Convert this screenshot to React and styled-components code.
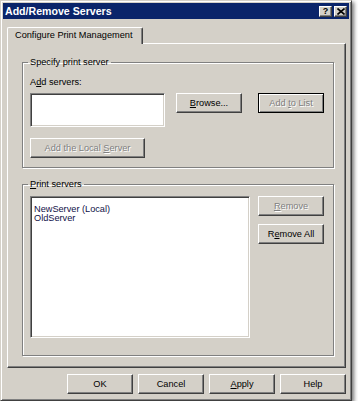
import React from 'react'
import styled, { createGlobalStyle, css } from 'styled-components'

const Global = createGlobalStyle`
  html, body {
    margin: 0;
    padding: 0;
    background: #ffffff;
  }
  body {
    font-family: "Liberation Sans", Arial, sans-serif;
    font-size: 9.2px;
    color: #000;
  }
  * { box-sizing: border-box; }
`

const Window = styled.div`
  width: 352px;
  height: 401px;
  background: #d4d0c8;
  border: 1px solid;
  border-color: #d4d0c8 #404040 #404040 #d4d0c8;
  box-shadow: inset 1px 1px 0 #ffffff, inset -1px -1px 0 #808080, 2px 2px 4px rgba(0, 0, 0, 0.55);
  padding: 2px;
  display: flex;
  flex-direction: column;
`

const TitleBar = styled.div`
  height: 16px;
  background: #0a246a;
  display: flex;
  align-items: center;
  justify-content: space-between;
  padding: 0 2px 0 2px;
`

const Title = styled.span`
  color: #fff;
  font-weight: bold;
  font-size: 10.6px;
`

const Caption = styled.div`
  display: flex;
  gap: 2px;
`

const CapButton = styled.div`
  width: 13px;
  height: 11px;
  background: #d4d0c8;
  border: 1px solid;
  border-color: #ffffff #404040 #404040 #ffffff;
  box-shadow: inset -1px -1px 0 #808080;
  display: flex;
  align-items: center;
  justify-content: center;
  font-weight: bold;
  font-size: 9px;
  line-height: 9px;
  color: #000;
`

const Body = styled.div`
  padding: 8px 3px 0 4px;
  display: flex;
  flex-direction: column;
`

const TabStrip = styled.div`
  display: flex;
`

const Tab = styled.div`
  position: relative;
  z-index: 1;
  width: 136px;
  height: 17px;
  margin-bottom: -1px;
  background: #d4d0c8;
  border-top: 1px solid #fff;
  border-left: 1px solid #fff;
  border-right: 1px solid #404040;
  border-radius: 2px 2px 0 0;
  box-shadow: inset -1px 0 0 #808080;
  padding: 2px 0 0 7px;
  line-height: 11px;
`

const Panel = styled.div`
  width: 339px;
  height: 325px;
  border: 1px solid;
  border-color: #ffffff #404040 #404040 #ffffff;
  box-shadow: inset -1px -1px 0 #808080;
  padding: 13px 0 0 14px;
  display: flex;
  flex-direction: column;
`

const Group = styled.fieldset`
  width: 312px;
  margin: ${p => (p.$second ? '11px 0 0 0' : '0')};
  border: 1px solid #808080;
  box-shadow: inset 1px 1px 0 #fff, 1px 1px 0 #fff;
  padding: ${p => p.$pad};
  min-width: 0;
`

const Legend = styled.legend`
  padding: 0 2px;
  margin-left: -2px;
  line-height: 11px;
`

const AddGrid = styled.div`
  display: grid;
  grid-template-columns: 135px 11px 66px 16px 66px;
  grid-template-areas:
    'label label label label label'
    'input . browse . add'
    'local local local local local';
`

const Label = styled.div`
  grid-area: label;
  line-height: 11px;
  margin-bottom: 5px;
`

const sunken = css`
  background: #fff;
  border: 1px solid;
  border-color: #808080 #ffffff #ffffff #808080;
  box-shadow: inset 1px 1px 0 #404040, inset -1px -1px 0 #d4d0c8;
`

const TextBox = styled.div`
  grid-area: input;
  height: 34px;
  ${sunken}
`

const Button = styled.div`
  grid-area: ${p => p.$area || 'auto'};
  width: ${p => p.$w || 66}px;
  height: 20px;
  align-self: start;
  margin-top: ${p => p.$mt || 0}px;
  background: #d4d0c8;
  border: 1px solid;
  border-color: ${p => (p.$default ? '#000' : '#ffffff #404040 #404040 #ffffff')};
  box-shadow: ${p =>
    p.$default ? 'inset 1px 1px 0 #fff, inset -1px -1px 0 #808080' : 'inset -1px -1px 0 #808080'};
  display: flex;
  align-items: center;
  justify-content: center;
  line-height: 11px;
  color: ${p => (p.$disabled ? '#808080' : '#000')};
  text-shadow: ${p => (p.$disabled ? '1px 1px 0 #fff' : 'none')};
`

const ServersRow = styled.div`
  display: flex;
  gap: 8px;
`

const ListBox = styled.div`
  width: 220px;
  height: 142px;
  ${sunken}
  padding: 8px 3px;
  color: #101048;
  line-height: 9px;
`

const SideButtons = styled.div`
  display: flex;
  flex-direction: column;
  gap: 8px;
`

const Footer = styled.div`
  display: flex;
  justify-content: flex-end;
  gap: 5px;
  padding-top: 6px;
`

export default function App() {
  return (
    <>
      <Global />
      <Window>
        <TitleBar>
          <Title>Add/Remove Servers</Title>
          <Caption>
            <CapButton>?</CapButton>
            <CapButton>
              <svg width="8" height="7" viewBox="0 0 8 7">
                <path d="M0.5 0.5 L7.5 6.5 M7.5 0.5 L0.5 6.5" stroke="#000" strokeWidth="1.6" />
              </svg>
            </CapButton>
          </Caption>
        </TitleBar>
        <Body>
          <TabStrip>
            <Tab>Configure Print Management</Tab>
          </TabStrip>
          <Panel>
            <Group $pad="9px 9px 9px 7px">
              <Legend>Specify print server</Legend>
              <AddGrid>
                <Label>A<u>d</u>d servers:</Label>
                <TextBox />
                <Button $area="browse">
                  <span><u>B</u>rowse...</span>
                </Button>
                <Button $area="add" $default $disabled>
                  <span>Add <u>t</u>o List</span>
                </Button>
                <Button $area="local" $w={115} $mt={11} $disabled>
                  <span>Add the Local <u>S</u>erver</span>
                </Button>
              </AddGrid>
            </Group>
            <Group $second $pad="6px 9px 17px 7px">
              <Legend><u>P</u>rint servers</Legend>
              <ServersRow>
                <ListBox>
                  <div>NewServer (Local)</div>
                  <div>OldServer</div>
                </ListBox>
                <SideButtons>
                  <Button $disabled>
                    <span><u>R</u>emove</span>
                  </Button>
                  <Button>
                    <span>R<u>e</u>move All</span>
                  </Button>
                </SideButtons>
              </ServersRow>
            </Group>
          </Panel>
          <Footer>
            <Button>OK</Button>
            <Button>Cancel</Button>
            <Button><span><u>A</u>pply</span></Button>
            <Button>Help</Button>
          </Footer>
        </Body>
      </Window>
    </>
  )
}
